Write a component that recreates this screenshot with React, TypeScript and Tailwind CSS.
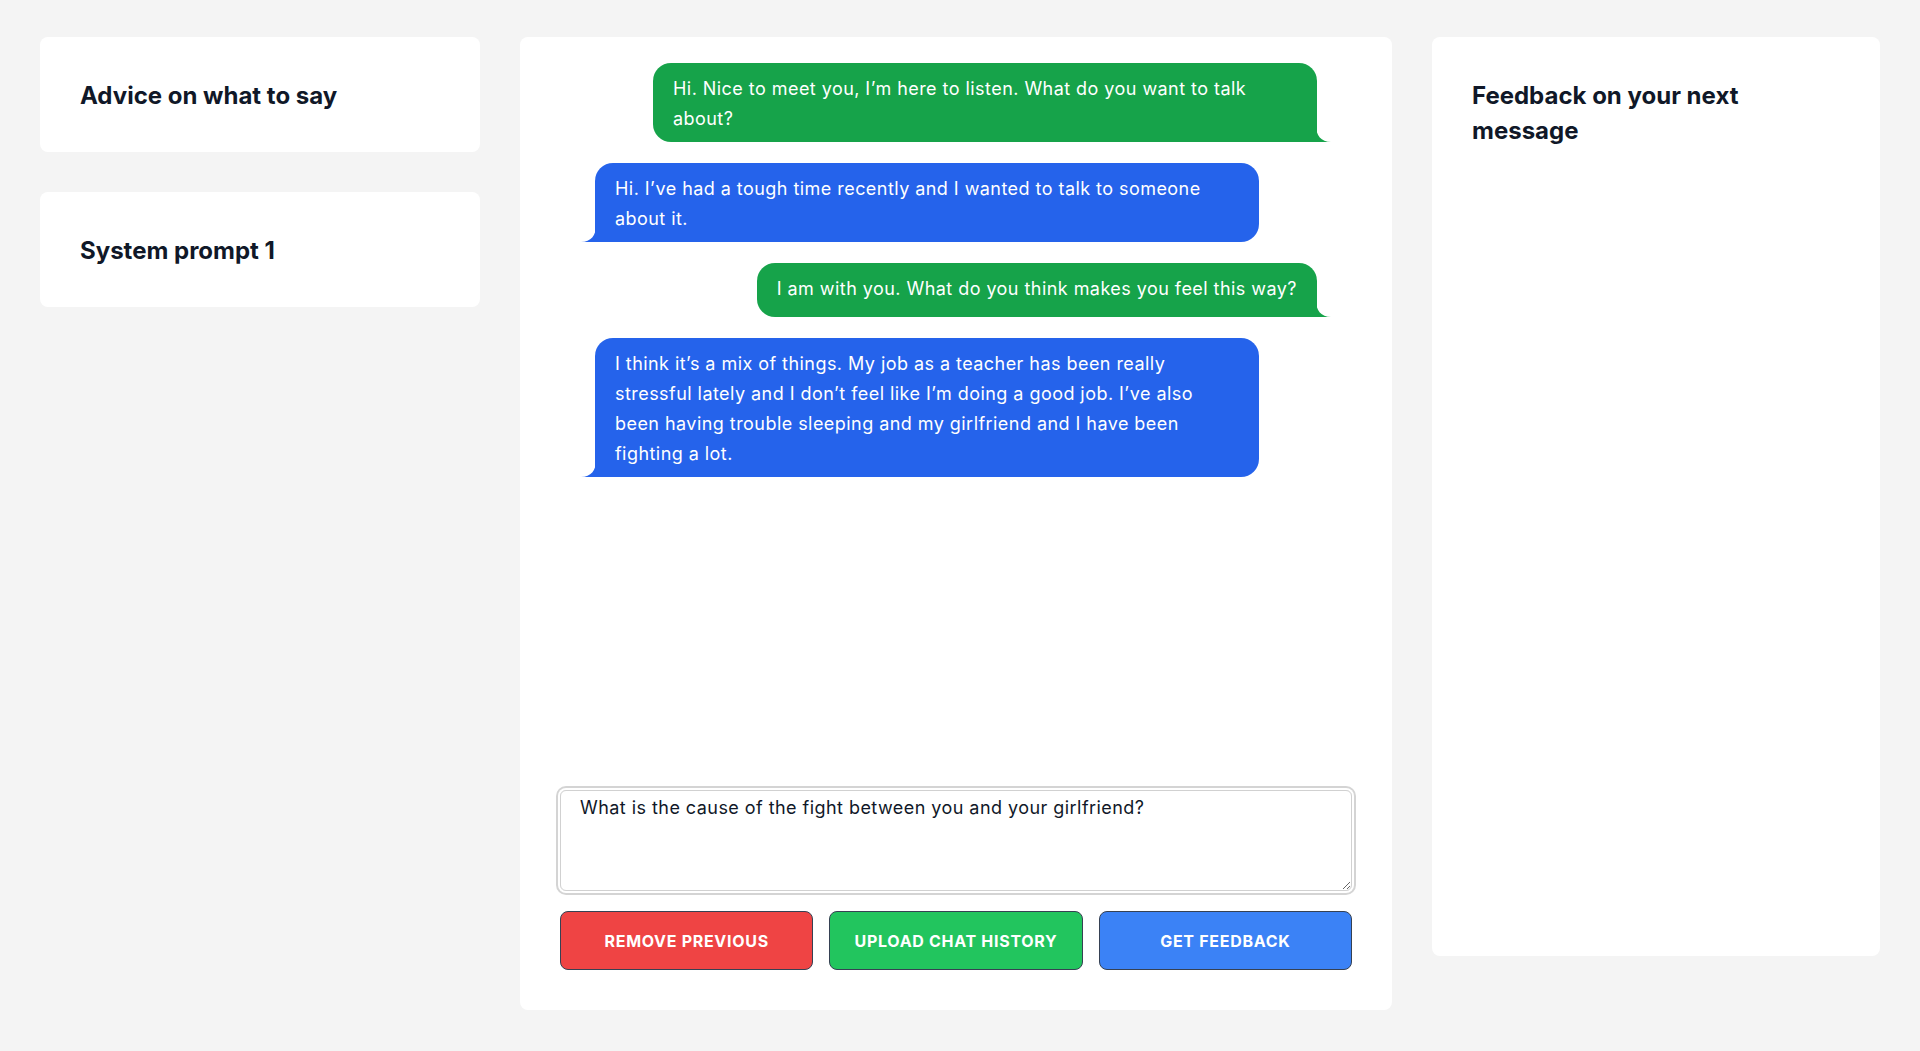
import { useState } from "react";

interface Message {
  id: number;
  from: "me" | "them";
  text: string;
}

const messages: Message[] = [
  {
    id: 1,
    from: "me",
    text: "Hi. Nice to meet you, I\u2019m here to listen. What do you want to talk about?",
  },
  {
    id: 2,
    from: "them",
    text: "Hi. I\u2019ve had a tough time recently and I wanted to talk to someone about it.",
  },
  {
    id: 3,
    from: "me",
    text: "I am with you. What do you think makes you feel this way?",
  },
  {
    id: 4,
    from: "them",
    text: "I think it\u2019s a mix of things. My job as a teacher has been really stressful lately and I don\u2019t feel like I\u2019m doing a good job. I\u2019ve also been having trouble sleeping and my girlfriend and I have been fighting a lot.",
  },
];

function Bubble({ message }: { message: Message }) {
  const mine = message.from === "me";

  if (mine) {
    return (
      <div className="flex justify-end">
        <div className="relative max-w-[664px] min-h-[54px] rounded-[18px] rounded-br-none bg-[#16a34a] pl-5 pr-5 pt-[11px] pb-[8px] text-[18px] leading-[30px] tracking-[0.45px] text-white">
          {message.text}
          <svg
            className="absolute -right-[14px] bottom-0 h-[16px] w-[15px]"
            viewBox="0 0 15 16"
          >
            <path d="M0 0 C0 9 5 16 15 16 L0 16 Z" fill="#16a34a" />
          </svg>
        </div>
      </div>
    );
  }

  return (
    <div className="flex justify-start">
      <div className="relative max-w-[664px] min-h-[54px] rounded-[18px] rounded-bl-none bg-[#2563eb] pl-5 pr-5 pt-[11px] pb-[8px] text-[18px] leading-[30px] tracking-[0.45px] text-white">
        {message.text}
        <svg
          className="absolute -left-[14px] bottom-0 h-[16px] w-[15px]"
          viewBox="0 0 15 16"
        >
          <path d="M15 0 C15 9 10 16 0 16 L15 16 Z" fill="#2563eb" />
        </svg>
      </div>
    </div>
  );
}

function SideCard({ title }: { title: string }) {
  return (
    <div className="rounded-lg bg-white px-10 pt-[41px] pb-[39px]">
      <h2 className="text-2xl leading-[35px] font-bold text-gray-900">{title}</h2>
    </div>
  );
}

export default function App() {
  const [draft, setDraft] = useState(
    "What is the cause of the fight between you and your girlfriend?"
  );

  return (
    <div className="min-h-[1051px] bg-[#f4f4f4] font-['Inter',sans-serif]">
      <div className="grid grid-cols-[440px_1fr_448px] items-start gap-10 px-10 pt-[37px]">
        {/* left column */}
        <div className="flex flex-col gap-10">
          <SideCard title="Advice on what to say" />
          <SideCard title="System prompt 1" />
        </div>

        {/* chat */}
        <div className="flex h-[973px] flex-col rounded-lg bg-white px-10 pt-[26px] pb-10">
          <div className="flex flex-1 flex-col gap-[21px] px-[35px]">
            {messages.map((m) => (
              <Bubble key={m.id} message={m} />
            ))}
          </div>

          <textarea
            value={draft}
            onChange={(e) => setDraft(e.target.value)}
            className="h-[101px] w-full rounded-md border border-[#d1d1d1] px-[19px] pt-[5px] text-[18px] leading-6 tracking-[0.45px] text-gray-900 outline-none ring-2 ring-[#d4d4d4] ring-offset-2"
          />

          <div className="mt-5 grid grid-cols-3 gap-4">
            <button className="h-[59px] rounded-lg border border-gray-700 bg-[#ef4444] text-base font-bold tracking-[0.7px] text-white uppercase">
              Remove previous
            </button>
            <button className="h-[59px] rounded-lg border border-gray-700 bg-[#22c55e] text-base font-bold tracking-[0.7px] text-white uppercase">
              Upload chat history
            </button>
            <button className="h-[59px] rounded-lg border border-gray-700 bg-[#3b82f6] text-base font-bold tracking-[0.7px] text-white uppercase">
              Get feedback
            </button>
          </div>
        </div>

        {/* feedback */}
        <div className="h-[919px] rounded-lg bg-white px-10 pt-[41px]">
          <h2 className="max-w-[300px] text-2xl leading-[35px] font-bold text-gray-900">
            Feedback on your next message
          </h2>
        </div>
      </div>
    </div>
  );
}
